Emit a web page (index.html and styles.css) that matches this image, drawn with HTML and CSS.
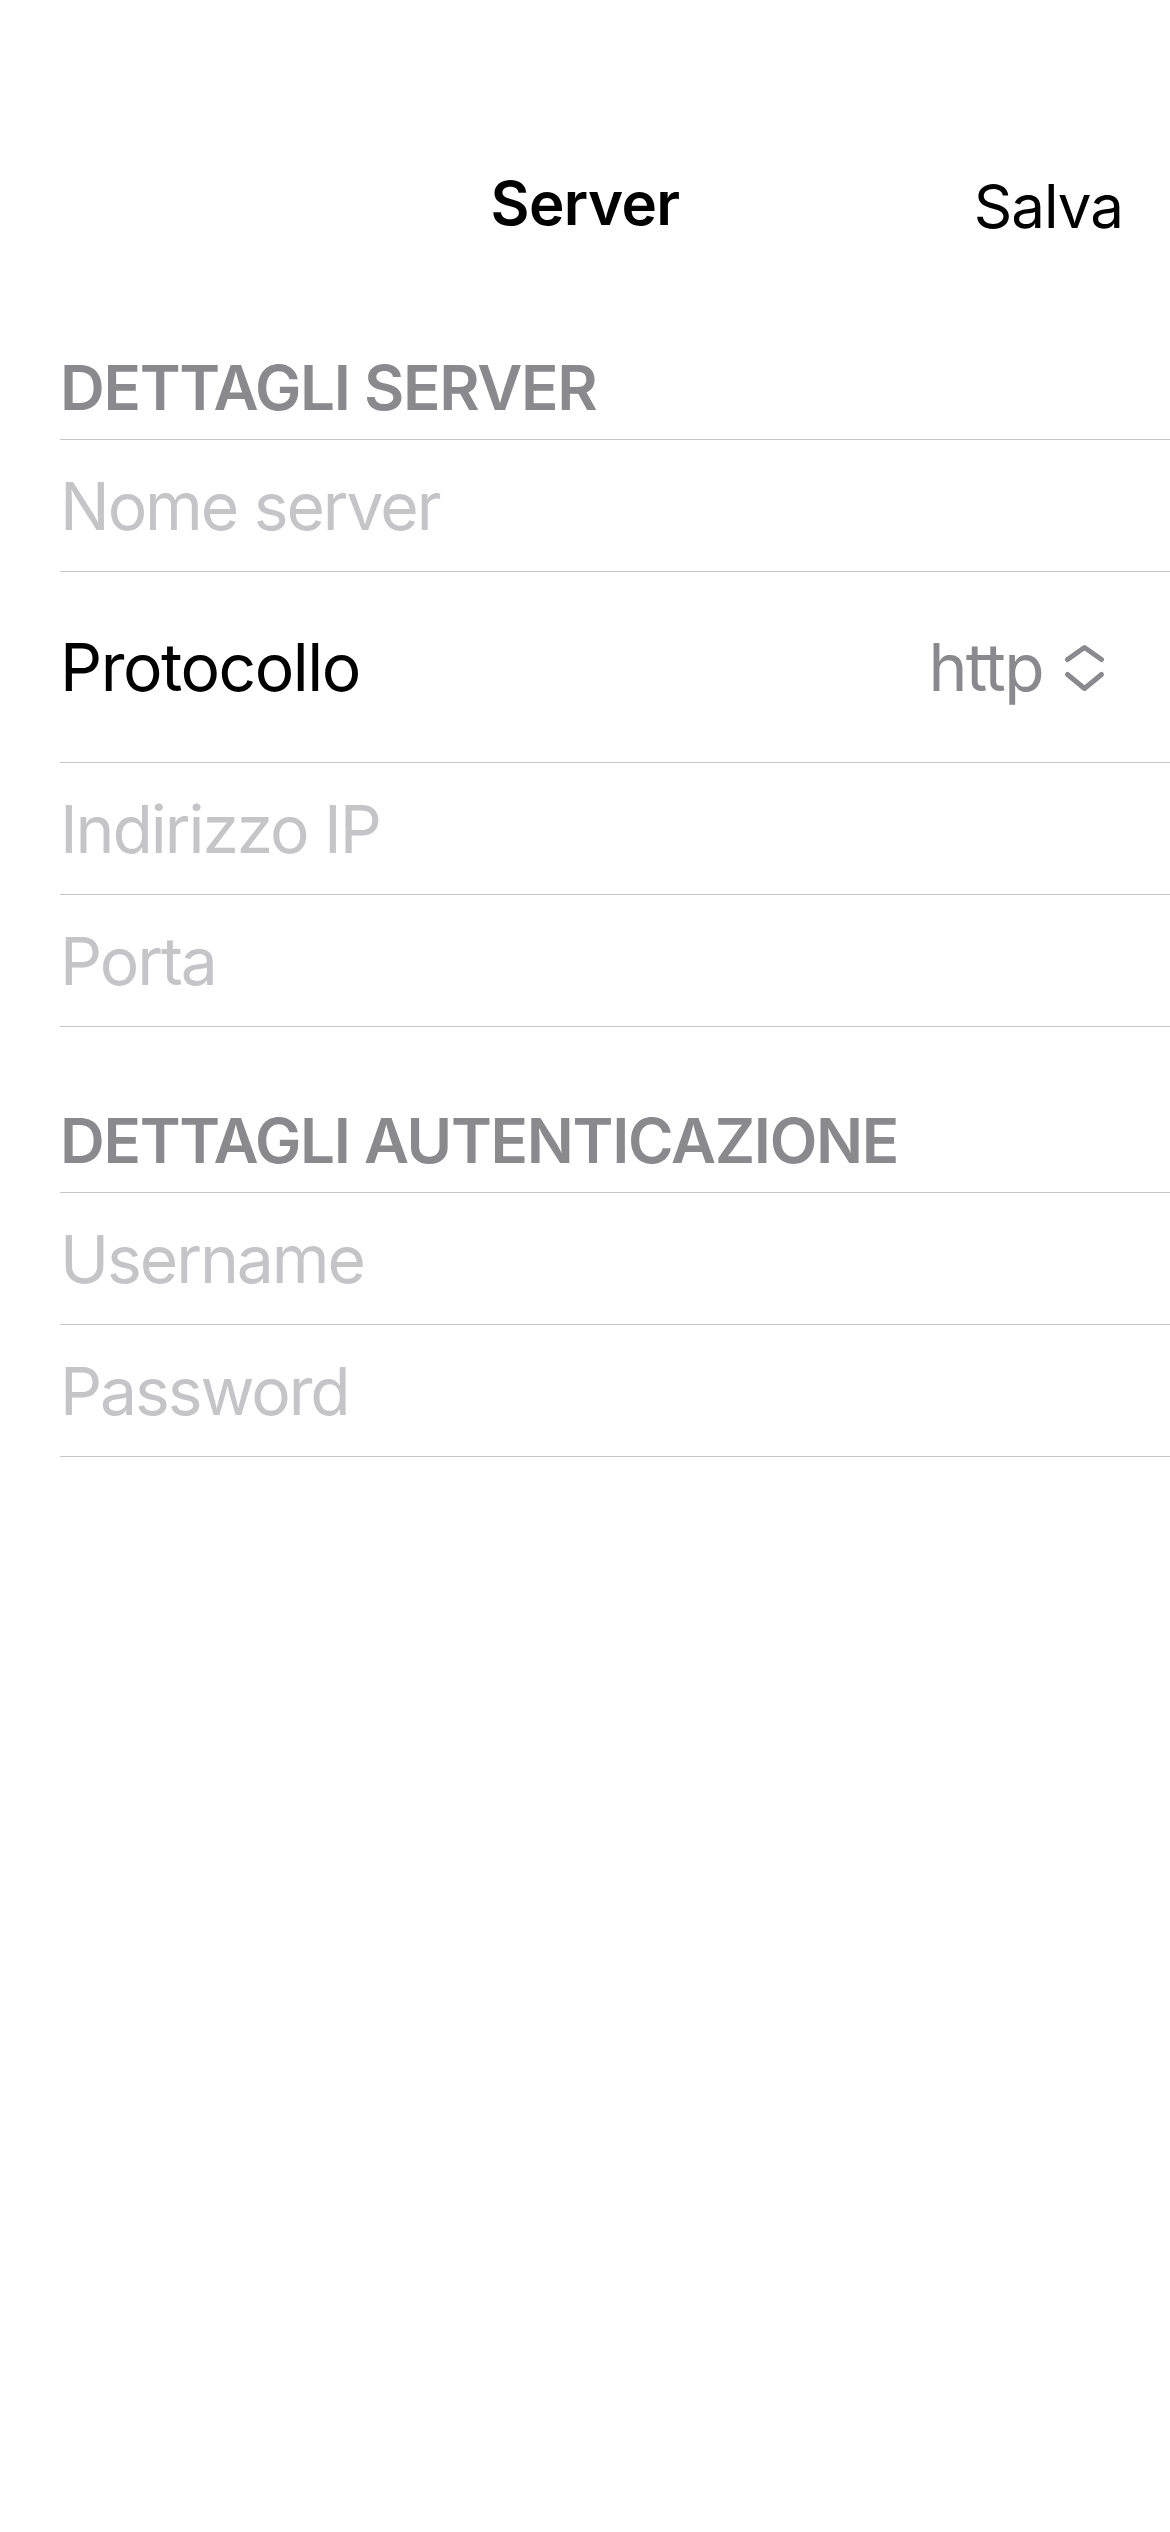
FILE: index.html
```html
<!DOCTYPE html>
<html lang="it">
<head>
<meta charset="utf-8">
<title>Server</title>
<link rel="stylesheet" href="styles.css">
</head>
<body>
<div class="screen">
  <header class="nav">
    <div class="nav-side"></div>
    <div class="nav-title">Server</div>
    <div class="nav-side nav-right"><span class="nav-action">Salva</span></div>
  </header>

  <section class="group group-first">
    <div class="group-header">DETTAGLI SERVER</div>
    <div class="row"><span class="placeholder">Nome server</span></div>
    <div class="row row-tall">
      <span class="label">Protocollo</span>
      <span class="picker">
        <span class="picker-value">http</span>
        <svg class="chevrons" width="44" height="50" viewBox="0 0 44 50" aria-hidden="true">
          <path d="M5.5 16.5 L22.5 4.5 L39.5 16.5" fill="none" stroke="#8a8a8e" stroke-width="5" stroke-linecap="round" stroke-linejoin="round"/>
          <path d="M5.5 31.5 L22.5 45.5 L39.5 31.5" fill="none" stroke="#8a8a8e" stroke-width="5" stroke-linecap="round" stroke-linejoin="round"/>
        </svg>
      </span>
    </div>
    <div class="row"><span class="placeholder">Indirizzo IP</span></div>
    <div class="row"><span class="placeholder">Porta</span></div>
  </section>

  <section class="group group-second">
    <div class="group-header">DETTAGLI AUTENTICAZIONE</div>
    <div class="row"><span class="placeholder">Username</span></div>
    <div class="row"><span class="placeholder">Password</span></div>
  </section>
</div>
</body>
</html>
```

FILE: styles.css
```css
html, body {
  margin: 0;
  padding: 0;
  background: #ffffff;
}

body {
  font-family: Inter, "Noto Sans", "Liberation Sans", sans-serif;
  color: #000000;
  width: 1170px;
  min-height: 2532px;
}

.screen {
  display: flex;
  flex-direction: column;
}

.nav {
  display: grid;
  grid-template-columns: 1fr auto 1fr;
  align-items: start;
  padding: 167px 47px 0 47px;
  height: 72px;
}

.nav-title {
  font-size: 60px;
  line-height: 72px;
  font-weight: 600;
  letter-spacing: -0.6px;
  text-align: center;
}

.nav-right {
  display: flex;
  justify-content: flex-end;
}

.nav-action {
  font-size: 60px;
  line-height: 72px;
  font-weight: 400;
  letter-spacing: -1px;
  padding-top: 3px;
}

.group {
  display: flex;
  flex-direction: column;
  padding-left: 60px;
}

.group-first {
  margin-top: 113px;
}

.group-second {
  margin-top: 78px;
}

.group-header {
  font-size: 62px;
  line-height: 72px;
  font-weight: 600;
  letter-spacing: -1.3px;
  color: #8a8a8e;
  padding: 0 0 15px 0;
  border-bottom: 1px solid #c6c6c8;
}

.row {
  display: flex;
  align-items: center;
  justify-content: space-between;
  box-sizing: border-box;
  height: 132px;
  padding: 26px 64px 25px 0;
  border-bottom: 1px solid #c6c6c8;
  font-size: 66px;
  line-height: 80px;
  letter-spacing: -2.1px;
}

.row-tall {
  height: 191px;
  padding-top: 55px;
  padding-bottom: 55px;
}

.placeholder {
  color: #c5c5c7;
}

.label {
  color: #000000;
  letter-spacing: -1.5px;
}

.picker {
  display: flex;
  align-items: center;
  gap: 19px;
}

.picker-value {
  color: #8a8a8e;
  letter-spacing: -1.6px;
}

.chevrons {
  display: block;
  margin-top: 2px;
}
```
